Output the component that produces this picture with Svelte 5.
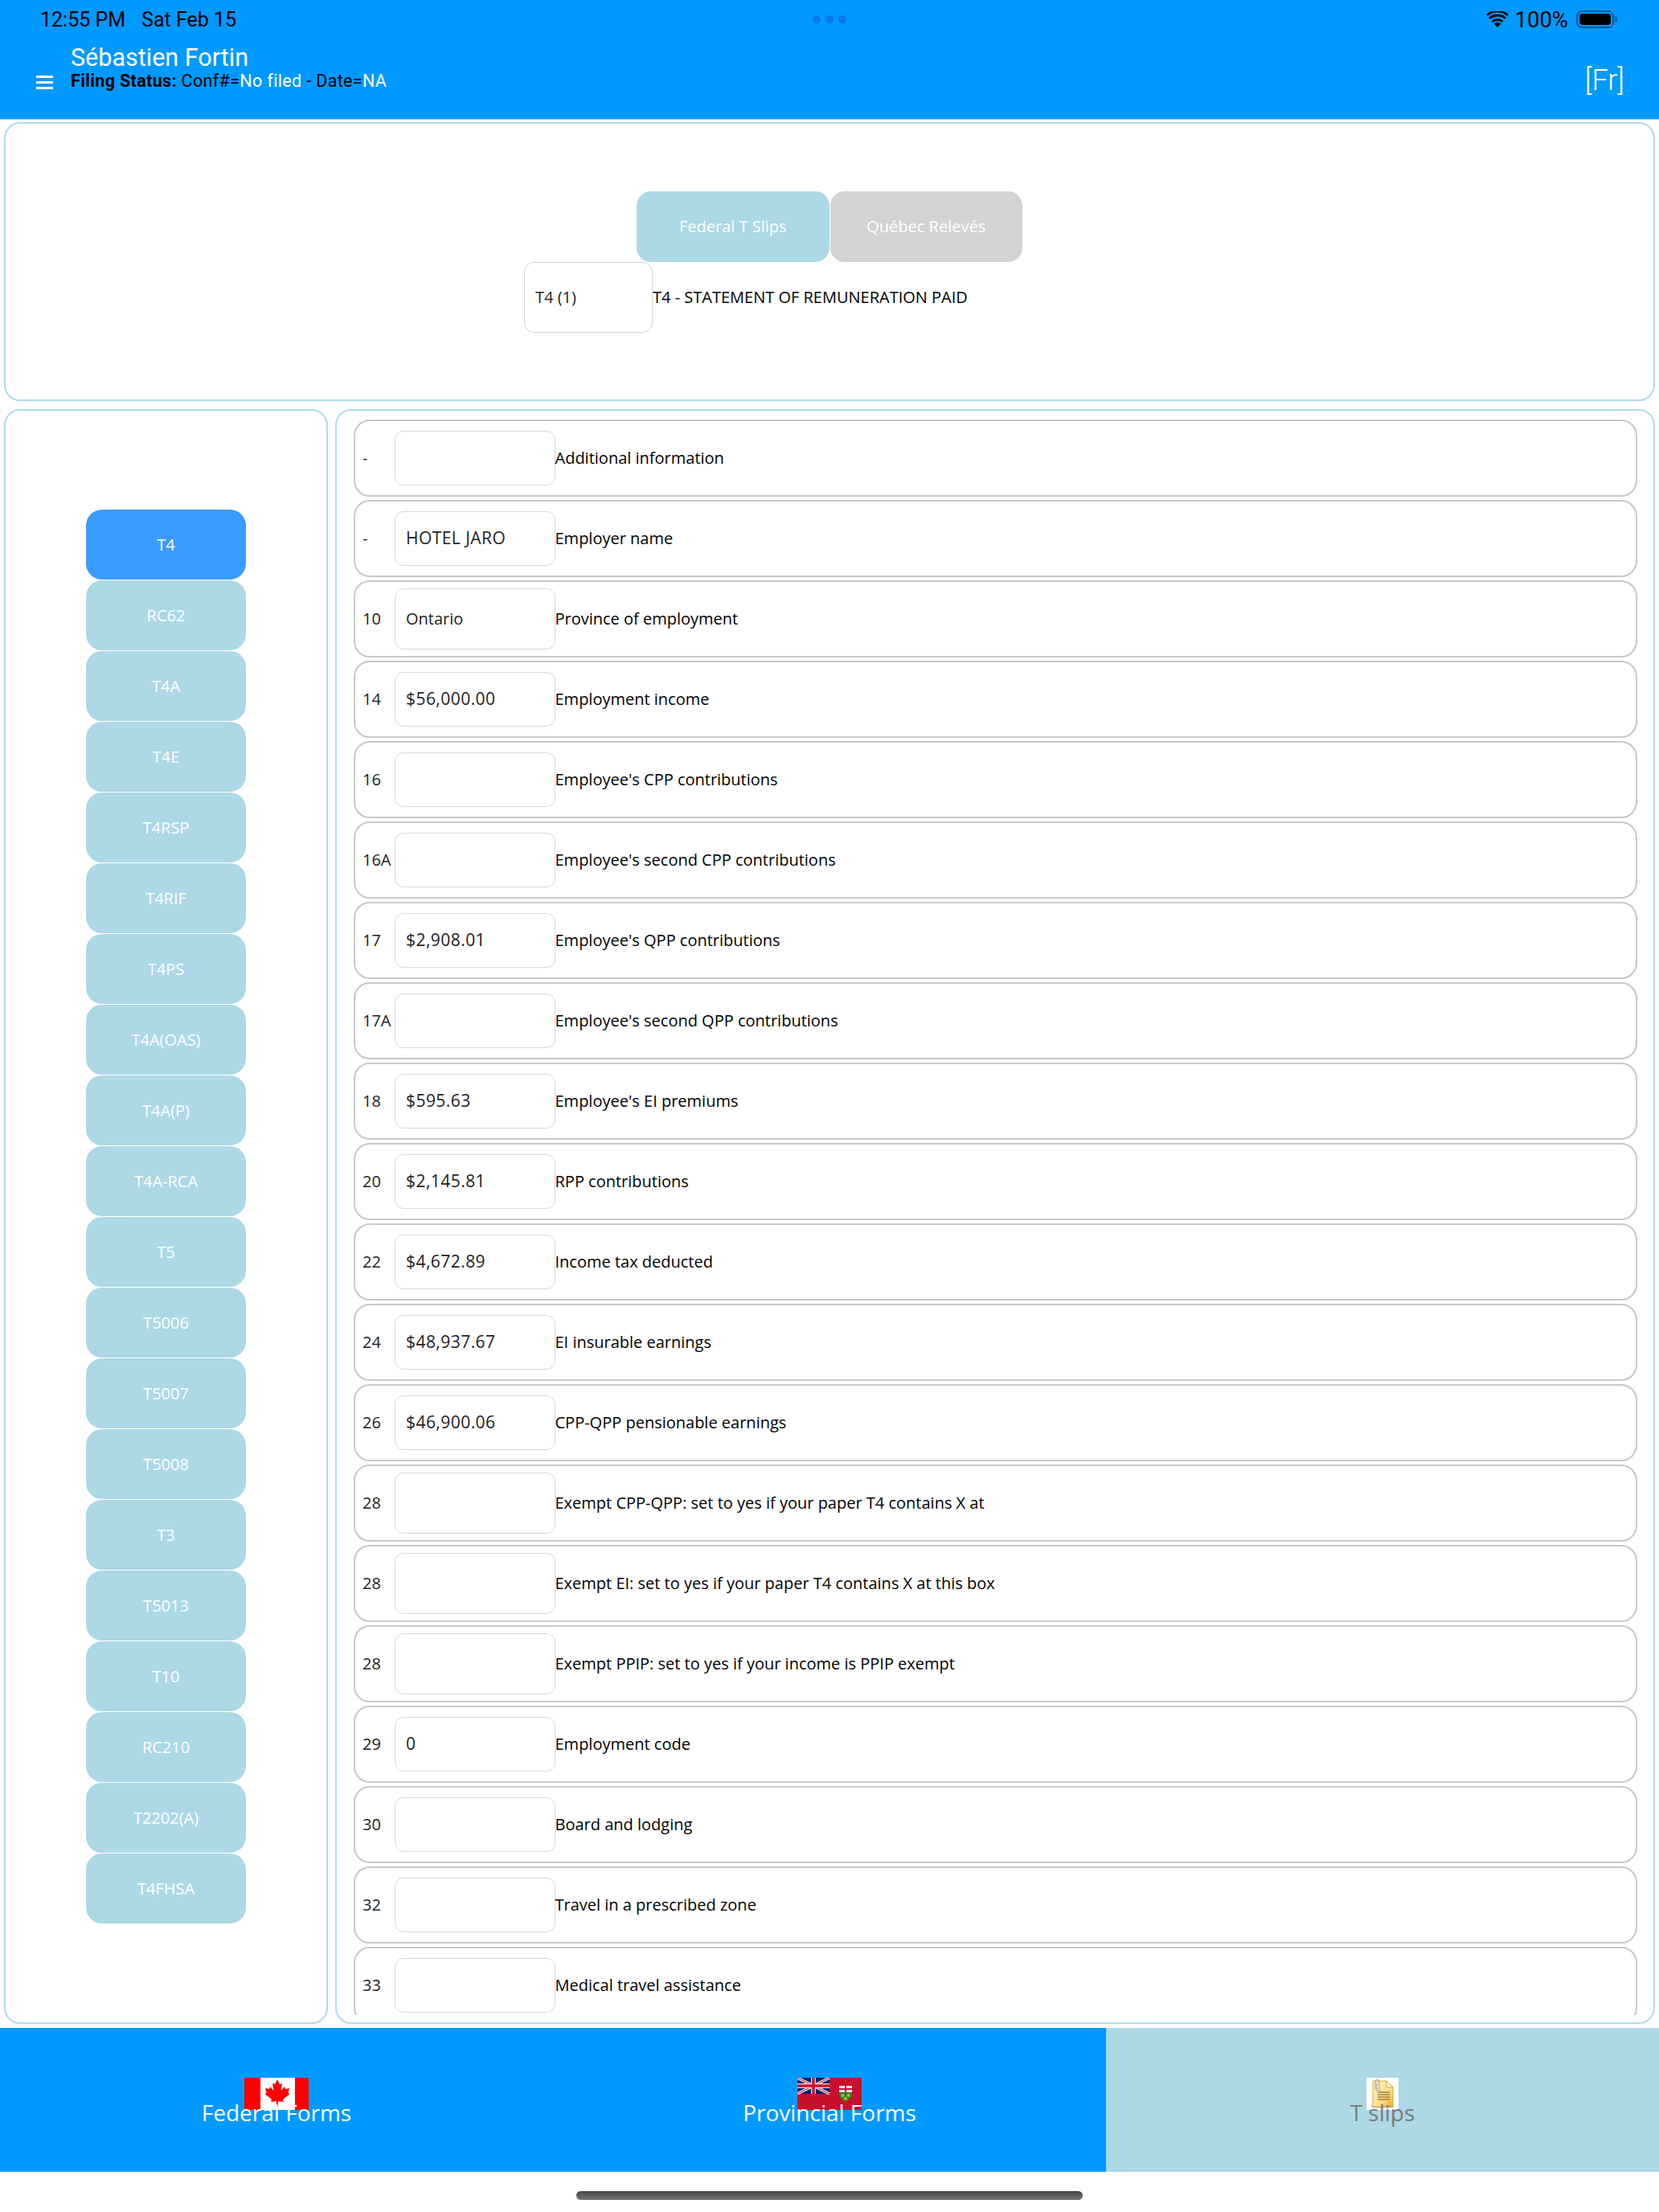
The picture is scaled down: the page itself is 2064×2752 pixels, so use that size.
<script>
  const slips = ['T4', 'RC62', 'T4A', 'T4E', 'T4RSP', 'T4RIF', 'T4PS', 'T4A(OAS)', 'T4A(P)', 'T4A-RCA', 'T5', 'T5006', 'T5007', 'T5008', 'T3', 'T5013', 'T10', 'RC210', 'T2202(A)', 'T4FHSA'];

  const rows = [
    { code: '-', value: '', label: 'Additional information' },
    { code: '-', value: 'HOTEL JARO', label: 'Employer name' },
    { code: '10', value: 'Ontario', label: 'Province of employment', select: true },
    { code: '14', value: '$56,000.00', label: 'Employment income' },
    { code: '16', value: '', label: "Employee's CPP contributions" },
    { code: '16A', value: '', label: "Employee's second CPP contributions" },
    { code: '17', value: '$2,908.01', label: "Employee's QPP contributions" },
    { code: '17A', value: '', label: "Employee's second QPP contributions" },
    { code: '18', value: '$595.63', label: "Employee's EI premiums" },
    { code: '20', value: '$2,145.81', label: 'RPP contributions' },
    { code: '22', value: '$4,672.89', label: 'Income tax deducted' },
    { code: '24', value: '$48,937.67', label: 'EI insurable earnings' },
    { code: '26', value: '$46,900.06', label: 'CPP-QPP pensionable earnings' },
    { code: '28', value: '', label: 'Exempt CPP-QPP: set to yes if your paper T4 contains X at', select: true },
    { code: '28', value: '', label: 'Exempt EI: set to yes if your paper T4 contains X at this box', select: true },
    { code: '28', value: '', label: 'Exempt PPIP: set to yes if your income is PPIP exempt', select: true },
    { code: '29', value: '0', label: 'Employment code' },
    { code: '30', value: '', label: 'Board and lodging' },
    { code: '32', value: '', label: 'Travel in a prescribed zone' },
    { code: '33', value: '', label: 'Medical travel assistance' }
  ];
</script>

<div class="screen">
  <header class="header">
    <div class="status">
      <div class="clock"><span>12:55 PM</span><span>Sat Feb 15</span></div>
      <div class="dots"><i></i><i></i><i></i></div>
      <div class="sys">
        <svg class="wifi" width="28" height="20" viewBox="0 0 28 20">
          <path d="M14 20l-4.200-4.600a6 6 0 0 1 8.400 0z" fill="#000" />
          <path d="M7.600 13a9.200 9.200 0 0 1 12.800 0" fill="none" stroke="#000" stroke-width="3" />
          <path d="M4 9a14.400 14.400 0 0 1 20 0" fill="none" stroke="#000" stroke-width="3" />
          <path d="M1 5a19 19 0 0 1 26 0" fill="none" stroke="#000" stroke-width="2.600" />
        </svg>
        <span class="pct">100%</span>
        <div class="battery"><div class="charge"></div></div>
        <div class="nub"></div>
      </div>
    </div>
    <div class="title">
      <div class="burger"><i></i><i></i><i></i></div>
      <div class="who">
        <div class="name">Sébastien Fortin</div>
        <div class="filing"><b>Filing Status:</b> Conf#=<em>No filed</em> - Date=<em>NA</em></div>
      </div>
      <div class="lang">[Fr]</div>
    </div>
  </header>

  <section class="panel top">
    <div class="switch">
      <div class="pill fed">Federal T Slips</div>
      <div class="pill qc">Québec Relevés</div>
    </div>
    <div class="current">
      <div class="picker">T4 (1)</div>
      <div class="slip-title">T4 - STATEMENT OF REMUNERATION PAID</div>
    </div>
  </section>

  <div class="body">
    <aside class="panel side">
      {#each slips as s, i}
        <div class="slip" class:active={i === 0}>{s}</div>
      {/each}
    </aside>
    <section class="panel list">
      <div class="scroll">
        {#each rows as r}
          <div class="row">
            <div class="code">{r.code}</div>
            <div class="field" class:select={r.select}><span>{r.value}</span></div>
            <div class="label">{r.label}</div>
          </div>
        {/each}
      </div>
    </section>
  </div>

  <nav class="tabs">
    <div class="tab">
      <svg class="ico" width="80" height="40" viewBox="0 0 80 40">
        <rect width="80" height="40" fill="#fff" />
        <rect width="20" height="40" fill="#f00" />
        <rect x="63" width="17" height="40" fill="#f00" />
        <path d="M41 2l3 6 3-1-1.500 9 4.500-5 1 3 5-1-1.500 6 2 1-8.500 7 1 3-7-1v7h-2v-7l-7 1 1-3-8.500-7 2-1-1.500-6 5 1 1-3 4.500 5-1.500-9 3 1z" fill="#f00" />
      </svg>
      <span>Federal Forms</span>
    </div>
    <div class="tab">
      <svg class="ico" width="80" height="40" viewBox="0 0 80 40">
        <rect width="80" height="40" fill="#c8102e" />
        <rect width="40" height="20" fill="#012169" />
        <path d="M0 0l40 20M40 0L0 20" stroke="#f4d9dd" stroke-width="3.500" />
        <path d="M0 0l40 20M40 0L0 20" stroke="#c8102e" stroke-width="1" />
        <path d="M20 0v20M0 10h40" stroke="#f4d9dd" stroke-width="6" />
        <path d="M20 0v20M0 10h40" stroke="#c8102e" stroke-width="3.500" />
        <path d="M52 10h16v11c0 4-4 7-8 9-4-2-8-5-8-9z" fill="#2e7d32" />
        <path d="M52 10h16v8H52z" fill="#f7e3e3" />
        <path d="M60 10v8M52 14h16" stroke="#c8102e" stroke-width="2" />
        <circle cx="56.500" cy="22" r="2" fill="#c9b800" />
        <circle cx="63.500" cy="22" r="2" fill="#c9b800" />
        <circle cx="60" cy="26" r="2" fill="#c9b800" />
      </svg>
      <span>Provincial Forms</span>
    </div>
    <div class="tab off">
      <svg class="ico" width="40" height="40" viewBox="0 0 40 40">
        <defs>
          <linearGradient id="paper" x1="0" y1="0" x2="1" y2="1">
            <stop offset="0" stop-color="#fff3c0" />
            <stop offset="0.600" stop-color="#fde08a" />
            <stop offset="1" stop-color="#f9a825" />
          </linearGradient>
        </defs>
        <rect width="40" height="40" fill="#fff" />
        <ellipse cx="20" cy="36" rx="15" ry="2" fill="#aaa" opacity="0.6" />
        <path d="M8 4h17l8 8v24H8z" fill="url(#paper)" stroke="#c9a74a" stroke-width="1" />
        <path d="M25 4v8h8z" fill="#fff8e0" stroke="#c9a74a" stroke-width="1" />
        <path d="M14 18h15M14 21h15M14 24h15M14 27h15" stroke="#7a4a1a" stroke-width="1.200" />
        <path d="M11 15V5a2.500 2.500 0 0 1 5 0v11a1.500 1.500 0 0 1-3 0V7" fill="none" stroke="#a8a8a8" stroke-width="1.200" />
      </svg>
      <span>T slips</span>
    </div>
  </nav>

  <div class="home"></div>
</div>

<style>
  :global(body) {
    background: #fff;
  }

  .screen {
    width: 2064px;
    height: 2752px;
    display: flex;
    flex-direction: column;
    overflow: hidden;
    font-family: "Open Sans", sans-serif;
    color: #000;
  }

  .header {
    position: relative;
    height: 149px;
    box-sizing: border-box;
    background: #0099ff;
    border-bottom: 1px solid #c8c8c8;
    font-family: Roboto, sans-serif;
  }

  .status {
    height: 48px;
    display: flex;
    align-items: center;
    justify-content: space-between;
    padding: 0 52px 0 50px;
    font-size: 25px;
  }

  .clock {
    display: flex;
    gap: 20px;
  }

  .dots {
    position: absolute;
    left: 1011px;
    top: 19px;
    display: flex;
    gap: 6px;
  }

  .dots i {
    width: 10px;
    height: 10px;
    border-radius: 50%;
    background: #0a78e6;
  }

  .sys {
    display: flex;
    align-items: center;
  }

  .pct {
    margin: 0 10px 0 7px;
    font-size: 27.5px;
  }

  .battery {
    width: 47px;
    height: 22px;
    box-sizing: border-box;
    border: 2px solid #005a9e;
    border-radius: 7px;
    padding: 2px;
  }

  .charge {
    height: 100%;
    background: #000;
    border-radius: 4px;
  }

  .nub {
    width: 3px;
    height: 8px;
    margin-left: 1px;
    background: #005a9e;
    border-radius: 0 3px 3px 0;
  }

  .title {
    display: flex;
    align-items: flex-end;
    padding: 7px 43px 0 45px;
  }

  .burger {
    display: flex;
    flex-direction: column;
    gap: 4px;
    width: 21px;
    margin: 0 22px 3px 0;
  }

  .burger i {
    height: 3px;
    background: #fff;
  }

  .who {
    flex: 1;
  }

  .name {
    font-size: 30.5px;
    line-height: 34px;
    color: #fff;
  }

  .filing {
    font-size: 21.5px;
    line-height: 26px;
    letter-spacing: 0.35px;
    margin-top: -1px;
  }

  .filing b {
    font-weight: 700;
  }

  .filing em {
    font-style: normal;
    color: #fff;
  }

  .lang {
    font-size: 36px;
    line-height: 40px;
    margin-bottom: -6px;
    color: #fff;
    font-weight: 300;
  }

  .panel {
    box-sizing: border-box;
    border: 2px solid #b0dcea;
    border-radius: 20px;
    background: #fff;
  }

  .top {
    height: 347px;
    margin: 3px 5px 0;
    display: flex;
    flex-direction: column;
    align-items: center;
    justify-content: center;
    font-size: 20px;
  }

  .switch {
    display: flex;
    gap: 1px;
  }

  .pill {
    width: 239.5px;
    height: 88px;
    border-radius: 18px;
    color: #fff;
    display: flex;
    align-items: center;
    justify-content: center;
  }

  .fed {
    background: #add8e6;
  }

  .qc {
    background: #d3d3d3;
  }

  .current {
    width: 760px;
    display: flex;
    align-items: center;
  }

  .picker {
    width: 160px;
    height: 88px;
    box-sizing: border-box;
    border: 1.5px solid #d3d3d3;
    border-radius: 12px;
    padding-left: 13px;
    display: flex;
    align-items: center;
    color: #222;
  }

  .body {
    height: 2009px;
    margin: 10px 5px 0;
    display: flex;
    gap: 9px;
  }

  .side {
    width: 403px;
    display: flex;
    flex-direction: column;
    align-items: center;
    justify-content: center;
    font-size: 20px;
  }

  .slip {
    width: 199px;
    height: 87px;
    margin-bottom: 1px;
    flex: none;
    border-radius: 20px;
    background: #add8e6;
    color: #fff;
    display: flex;
    align-items: center;
    justify-content: center;
  }

  .slip.active {
    background: #3a9bff;
  }

  .list {
    flex: 1;
    min-width: 0;
    padding: 11px 20px 9px 21px;
  }

  .scroll {
    height: 100%;
    overflow: hidden;
  }

  .row {
    height: 96px;
    margin-bottom: 4px;
    box-sizing: border-box;
    border: 2px solid #c8c8c8;
    border-radius: 20px;
    display: flex;
    align-items: center;
    font-size: 20px;
  }

  .code {
    width: 40px;
    padding-left: 9px;
    margin-bottom: 2px;
    color: #222;
    flex: none;
  }

  .label {
    margin-bottom: 2px;
  }

  .field {
    width: 199.5px;
    height: 68px;
    box-sizing: border-box;
    border: 1.5px solid #d8d8d8;
    border-radius: 11px;
    padding: 0 0 2px 13px;
    display: flex;
    align-items: center;
    color: #222;
    font-size: 21px;
    letter-spacing: 0.45px;
    flex: none;
  }

  .field.select {
    height: 76px;
    font-size: 20px;
    letter-spacing: 0;
  }

  .tabs {
    height: 179px;
    margin-top: 5px;
    display: flex;
    background: #0099ff;
  }

  .tab {
    flex: 1;
    display: flex;
    flex-direction: column;
    align-items: center;
    padding-top: 62px;
    color: #fff;
    font-size: 28px;
    line-height: 40px;
  }

  .tab.off {
    background: #add8e6;
    color: #7a7a7a;
  }

  .ico {
    display: block;
    flex: none;
  }

  .tab span {
    margin-top: -17px;
  }

  .home {
    width: 630px;
    height: 11px;
    margin: 24px auto 0;
    border-radius: 6px;
    background: linear-gradient(#444, #777);
  }
</style>
